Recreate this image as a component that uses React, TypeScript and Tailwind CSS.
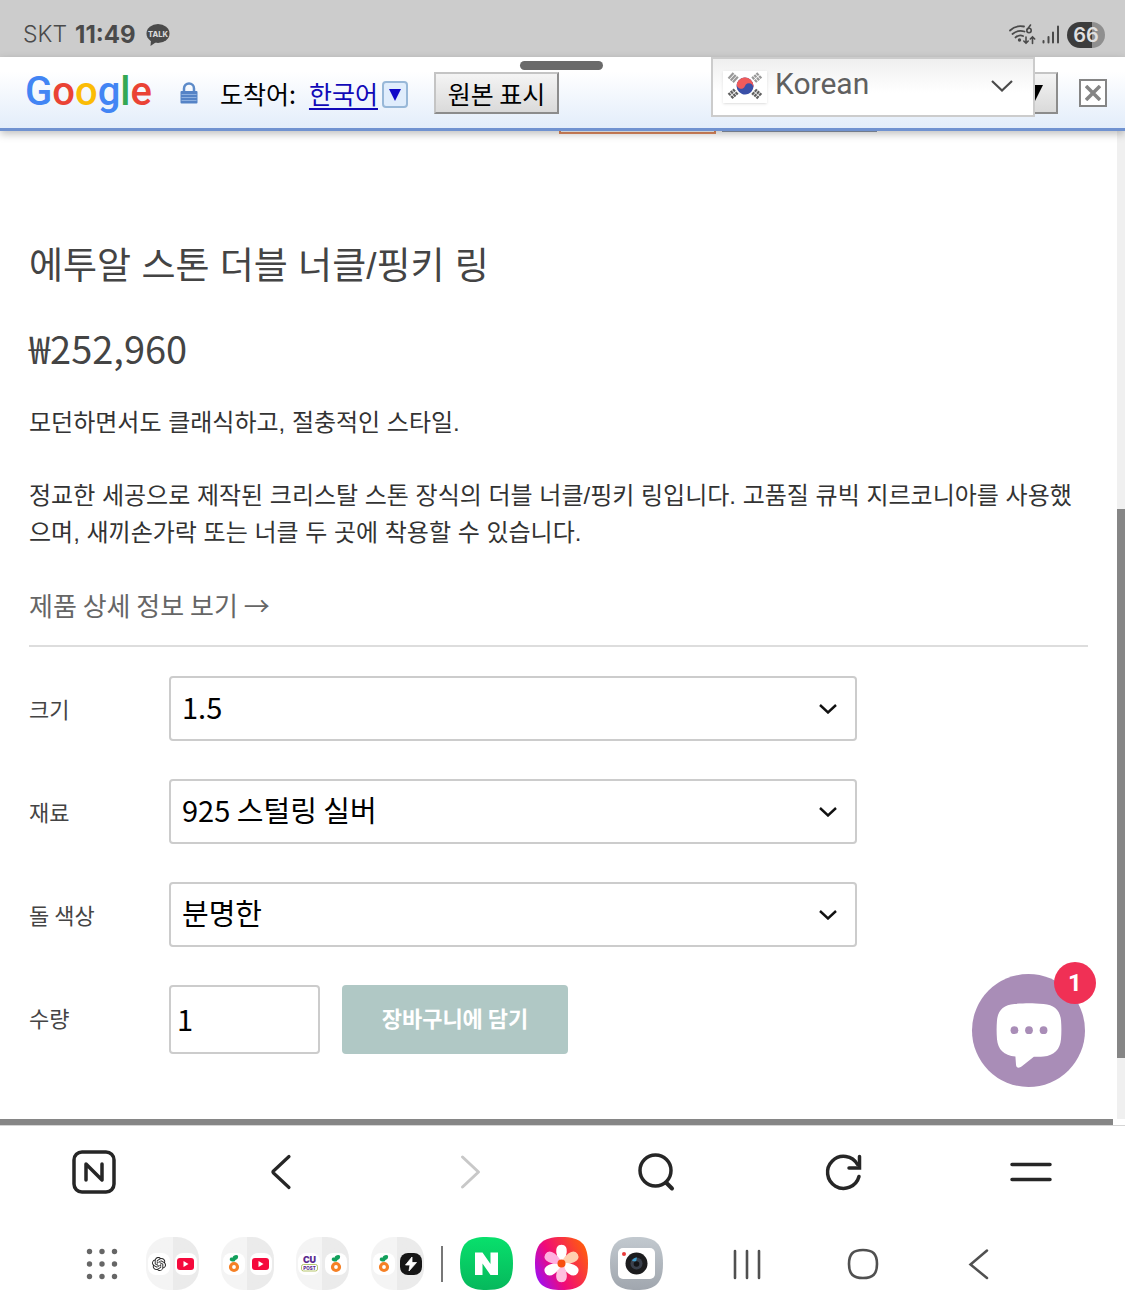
import React from "react";
import { SiOpenai } from "react-icons/si";

const KR = "font-['Noto_Sans_CJK_KR',sans-serif]";
const MIXED = "font-['Liberation_Sans','Noto_Sans_CJK_KR',sans-serif]";

function StatusBar() {
  return (
    <header className="flex h-[57px] items-center justify-between bg-[#ccc] pt-3 pr-5 pl-[23px] font-['Inter',sans-serif] text-2xl text-[#4a4a4a]">
      <div className="flex items-center">
        <span className="text-[23px] font-light">SKT</span>
        <span className="ml-2 font-bold">11:49</span>
        <svg className="ml-[10px] h-6 w-6" viewBox="0 0 24 24" aria-label="카카오톡">
          <ellipse cx="12" cy="10.500" rx="11.500" ry="9.500" fill="#4a4a4a" />
          <path d="M5 17 L4.500 23 L11 18.500z" fill="#4a4a4a" />
          <text x="12" y="13.500" textAnchor="middle" fontSize="7.500" fontWeight="800" fill="#d8d8d8" fontFamily="Inter, sans-serif">
            TALK
          </text>
        </svg>
      </div>
      <div className="flex items-center">
        <svg className="h-6 w-7" viewBox="0 0 28 24" fill="none" stroke="#4a4a4a" strokeWidth="1.800" strokeLinecap="round" aria-label="Wi-Fi">
          <path d="M1 7.500C5 3.500 10 2.500 15 3.500M3.500 11C7 8 11 7 15.500 8.500M6.500 14.500C9 12.200 11.500 11.800 14 13" />
          <circle cx="10.500" cy="17" r="0.800" fill="#4a4a4a" />
          <path d="M17 14v6M14.800 18l2.200 2.200 2.200-2.200M23.500 20.500v-6.500M21.300 16l2.200-2.200 2.200 2.200" strokeWidth="1.600" />
          <path d="M21.500 2L18.300 6.500" strokeWidth="1.600" />
          <circle cx="20" cy="7.500" r="2.200" strokeWidth="1.600" />
        </svg>
        <svg className="ml-1 h-5 w-5" viewBox="0 0 20 20" stroke="#4a4a4a" strokeWidth="2" strokeLinecap="round" aria-label="신호">
          <path d="M2.500 16v1.500M7.500 12v5.500M12 7.500v10M17 1.500v16" />
        </svg>
        <span className="ml-[6px] flex h-[26px] w-[38px] items-center justify-center rounded-full bg-linear-to-r from-[#3c3c3c] from-65% to-[#8f8f8f] to-65% text-xl font-semibold text-[#e0e0e0]">
          66
        </span>
      </div>
    </header>
  );
}

function Flag() {
  return (
    <svg className="h-8 w-11 bg-white shadow" viewBox="0 0 44 32" aria-hidden="true">
      <rect width="44" height="32" fill="#fff" />
      <g transform="rotate(20 22 15)">
        <circle cx="22" cy="15" r="8.500" fill="#3a50a8" />
        <path d="M13.500 15a8.500 8.500 0 0 1 17 0a4.250 4.250 0 0 0-8.500 0a4.250 4.250 0 0 1-8.500 0z" fill="#ef5b5b" />
      </g>
      <g fill="none" strokeWidth="2.200">
        <path d="M5.500 7.500l5-5.500M7.700 9.400l5-5.500M9.900 11.300l5-5.500" stroke="#999" />
        <path d="M33.500 2l5 5.500M31.300 3.900l5 5.500M29.100 5.800l5 5.500" stroke="#999" strokeDasharray="3.200 .8" />
        <path d="M5.500 22l5 5.500M7.700 20.100l5 5.500M9.900 18.200l5 5.500" stroke="#606060" strokeDasharray="3.200 .8" />
        <path d="M29.100 23.700l5-5.500M31.300 25.600l5-5.500M33.500 27.500l5-5.500" stroke="#606060" strokeDasharray="3.200 .8" />
      </g>
    </svg>
  );
}

function TranslateBar() {
  return (
    <div className={`${KR} relative z-10 flex h-[74px] items-center border-b-3 border-[#7092d0] bg-linear-to-b from-white from-20% to-[#e3edfa] pr-[18px] pl-[25px] text-[25px] leading-8 text-black shadow-[0_3px_8px_rgba(0,0,0,0.25)]`}>
      <div className="w-[129px] pb-[2px] font-['Roboto',sans-serif] text-[40px] leading-none font-medium" aria-label="Google">
        <span className="text-[#4285f4]">G</span>
        <span className="text-[#ea4335]">o</span>
        <span className="text-[#fbbc05]">o</span>
        <span className="text-[#4285f4]">g</span>
        <span className="text-[#34a853]">l</span>
        <span className="text-[#ea4335]">e</span>
      </div>
      <svg className="ml-[26px] h-[22px] w-[18px]" viewBox="0 0 18 22" aria-hidden="true">
        <path d="M4 10V6.500a5 5 0 0 1 10 0V10" fill="none" stroke="#5d8bc9" strokeWidth="2.500" />
        <rect x="0.500" y="9" width="17" height="12.500" rx="1" fill="#5583c6" />
        <path d="M1.500 12.500h15M1.500 15.500h15M1.500 18.500h15" stroke="#8db0e0" strokeWidth="1" />
      </svg>
      <span className="ml-[22px]">도착어:</span>
      <a href="#language" className="ml-[13px] text-[#1109b8] underline underline-offset-4">
        한국어
      </a>
      <button aria-label="언어 선택" className="mt-1 ml-1 flex h-[27px] w-[26px] items-center justify-center rounded-sm border-2 border-[#98b8d8] bg-[#e0edfc]">
        <svg className="h-3 w-3" viewBox="0 0 12 12">
          <path d="M0 0h12L6 12z" fill="#1109c8" />
        </svg>
      </button>
      <button className="ml-[26px] h-[42px] w-[125px] shrink-0 border-2 border-t-[#c4c4c4] border-r-[#8c8c8c] border-b-[#8c8c8c] border-l-[#c4c4c4] bg-linear-to-b from-[#f4f4f4] to-[#dadada]">
        원본 표시
      </button>
      <button aria-label="옵션" className="ml-auto flex h-[42px] w-[60px] items-center justify-end border-2 border-t-[#c4c4c4] border-r-[#8c8c8c] border-b-[#8c8c8c] border-l-[#c4c4c4] bg-linear-to-b from-[#f4f4f4] to-[#dadada] pr-[13px]">
        <svg className="h-4 w-4" viewBox="0 0 16 16">
          <path d="M0 0h16L8 16z" />
        </svg>
      </button>
      <button aria-label="닫기" className="ml-[21px] flex h-7 w-7 items-center justify-center border-2 border-[#858585] bg-white">
        <svg className="h-4 w-4" viewBox="0 0 16 16" stroke="#858585" strokeWidth="3.500">
          <path d="M1 1l14 14M15 1L1 15" />
        </svg>
      </button>
      <div className="absolute top-1 left-[520px] h-[9px] w-[83px] rounded-full bg-[#6a6a6a]" />
      <div className="absolute top-0 right-[90px] h-[60px] w-[324px] border-2 border-[#ccc] bg-linear-to-b from-[#efefef] to-white to-60%">
        <div className="pointer-events-none absolute top-3 left-[10px]">
          <Flag />
        </div>
        <select aria-label="Language" className="h-[50px] w-full appearance-none pl-[62px] font-['Roboto',sans-serif] text-[30px] text-[#606060]">
          <option>Korean</option>
        </select>
        <svg className="pointer-events-none absolute top-[21px] right-5 h-3 w-[22px]" viewBox="0 0 22 12" fill="none" stroke="#4a4a4a" strokeWidth="2.200">
          <path d="M1 1l10 9.500L21 1" />
        </svg>
      </div>
    </div>
  );
}

function SelectRow({ id, label, options }: { id: string; label: string; options: string[] }) {
  return (
    <div className="flex items-center">
      <label htmlFor={id} className="w-[140px] shrink-0 text-[22px] text-[#444]">
        {label}
      </label>
      <div className="relative w-[65%]">
        <select id={id} className="block h-[65px] w-full appearance-none rounded-sm border-2 border-[#ccc] bg-white px-[11px] pb-1 text-[29px] text-black">
          {options.map((o) => (
            <option key={o}>{o}</option>
          ))}
        </select>
        <svg className="pointer-events-none absolute top-7 right-5 h-[10px] w-[18px]" viewBox="0 0 18 10" fill="none" stroke="#111" strokeWidth="2.400">
          <path d="M1 1l8 7.500L17 1" />
        </svg>
      </div>
    </div>
  );
}

function Chat() {
  return (
    <button aria-label="채팅 열기" className="absolute right-8 bottom-8 h-[113px] w-[113px] rounded-full bg-[#a98db7] pt-[10px]">
      <svg className="mx-auto h-[66px] w-[66px]" viewBox="0 0 68 68">
        <path d="M19 1C31 0 37 0 49 1C60 2 66 7 67 18C67.500 25 67.500 30 67 37C66 48 60 54 49 55C45 55.500 42 55.500 39 55.500L27 65C23 68 20.500 67 20.500 62L20 55C8 54 2 48 1 37C.500 30 .500 25 1 18C2 7 8 2 19 1z" fill="#fff" />
        <g fill="#a98db7">
          <circle cx="19" cy="28" r="4" />
          <circle cx="34" cy="28" r="4" />
          <circle cx="49" cy="28" r="4" />
        </g>
      </svg>
      <span className="absolute -top-3 -right-[11px] flex h-[42px] w-[42px] items-center justify-center rounded-full bg-[#f03055] font-['Roboto',sans-serif] text-2xl leading-none font-bold text-white">
        1
      </span>
    </button>
  );
}

function Product() {
  return (
    <main className={`${KR} relative flex-1 px-[29px] pb-[65px] text-2xl leading-[37px] text-[#333]`}>
      <div className="-mx-[29px] flex h-[3px] items-start gap-[6px] pl-[559px]">
        <div className="h-[3px] w-[157px] border-2 border-t-0 border-[#e08a60]" />
        <div className="h-px w-[155px] bg-[#8d98aa]" />
      </div>
      <h1 className={`${MIXED} mt-[109px] text-[37px] leading-[48px] text-[#444]`}>에투알 스톤 더블 너클/핑키 링</h1>
      <p className="mt-[33px] text-[38px] leading-[48px] text-[#444]">₩252,960</p>
      <div className={MIXED}>
        <p className="mt-8">모던하면서도 클래식하고, 절충적인 스타일.</p>
        <p className="mt-9">
          정교한 세공으로 제작된 크리스탈 스톤 장식의 더블 너클/핑키 링입니다. 고품질 큐빅 지르코니아를 사용했으며, 새끼손가락 또는 너클 두 곳에 착용할 수 있습니다.
        </p>
      </div>
      <div className="mt-9 border-b-2 border-[#ddd] pb-[22px]">
        <a href="#details" className="block text-[26px] leading-9 text-[#666]">
          제품 상세 정보 보기 →
        </a>
      </div>
      <form className="mt-[29px] flex flex-col gap-[38px]" onSubmit={(e) => e.preventDefault()}>
        <SelectRow id="size" label="크기" options={["1.5"]} />
        <SelectRow id="material" label="재료" options={["925 스털링 실버"]} />
        <SelectRow id="stone" label="돌 색상" options={["분명한"]} />
        <div className="flex items-center">
          <label htmlFor="qty" className="w-[140px] shrink-0 pb-1 text-[22px] text-[#444]">
            수량
          </label>
          <input id="qty" defaultValue="1" className="h-[69px] w-[151px] rounded-sm border-2 border-[#ccc] px-[6px] pb-1 text-[29px] text-black" />
          <button className="ml-[22px] h-[69px] w-[226px] rounded-sm bg-[#b0c8c5] pb-1 text-[22px] font-bold text-white">장바구니에 담기</button>
        </div>
      </form>
      <Chat />
    </main>
  );
}

function BrowserNav() {
  const item = "flex items-center justify-center";
  return (
    <nav aria-label="브라우저" className="grid h-[92px] grid-cols-6 bg-white text-[#262626]">
      <button aria-label="네이버 홈" className={item}>
        <svg className="h-11 w-11" viewBox="0 0 44 44" fill="none" stroke="currentColor" strokeWidth="3.500">
          <rect x="2" y="2" width="40" height="40" rx="8" />
          <path d="M14 30V14L30 30V14" strokeLinecap="round" strokeLinejoin="round" />
        </svg>
      </button>
      <button aria-label="뒤로" className={item}>
        <svg className="h-10 w-10" viewBox="0 0 40 40" fill="none" stroke="currentColor" strokeWidth="3.200" strokeLinecap="round" strokeLinejoin="round">
          <path d="M28 4.500L12.500 19Q11.500 20 12.500 21L28 35.500" />
        </svg>
      </button>
      <button aria-label="앞으로" disabled className={`${item} text-[#c8c8c8]`}>
        <svg className="h-10 w-10" viewBox="0 0 40 40" fill="none" stroke="currentColor" strokeWidth="3" strokeLinecap="round" strokeLinejoin="round">
          <path d="M13.500 5L29.500 20L13.500 35" />
        </svg>
      </button>
      <button aria-label="검색" className={item}>
        <svg className="h-11 w-11" viewBox="0 0 44 44" fill="none" stroke="currentColor" strokeWidth="3.500" strokeLinecap="round">
          <ellipse cx="21.500" cy="20.500" rx="15.500" ry="15.500" />
          <path d="M32.500 33l5.500 5.500" strokeWidth="4" />
        </svg>
      </button>
      <button aria-label="새로고침" className={item}>
        <svg className="h-11 w-11" viewBox="0 0 44 44" fill="none" stroke="currentColor" strokeWidth="3.500" strokeLinecap="round">
          <path d="M37 26.500A16 16 0 1 1 35.500 14.500" />
          <path d="M37.500 6.500V18H27" />
        </svg>
      </button>
      <button aria-label="메뉴" className={item}>
        <svg className="h-10 w-[42px]" viewBox="0 0 42 40" stroke="currentColor" strokeWidth="3.500" strokeLinecap="round">
          <path d="M2 12.500h38M2 27.500h38" />
        </svg>
      </button>
    </nav>
  );
}

function Youtube() {
  return (
    <svg className="h-3 w-[17px]" viewBox="0 0 17 12">
      <rect width="17" height="12" rx="3" fill="#f5093c" />
      <path d="M6.500 3v6l5-3z" fill="#fff" />
    </svg>
  );
}

function Carrot() {
  return (
    <svg className="h-[18px] w-3" viewBox="0 0 12 18">
      <circle cx="6" cy="12" r="3.500" fill="#fff" stroke="#f58025" strokeWidth="3.200" />
      <path d="M2 5.500C1 2.500 3.500 2 4.500 2.800C5 0 9 -.5 10 .8C10.500 3.500 9 4.500 7.500 5L6.500 6.500H4z" fill="#13a05c" />
    </svg>
  );
}

function CuPost() {
  return (
    <svg className="h-[17px] w-[17px]" viewBox="0 0 17 17">
      <text x="8.500" y="7.500" textAnchor="middle" fontSize="9" fontWeight="900" fill="#5b2b90" fontFamily="Inter, sans-serif">
        CU
      </text>
      <rect x="0.500" y="9.500" width="16" height="6.500" rx="2" fill="#fff" stroke="#a5b84a" strokeWidth="0.800" />
      <text x="8.500" y="14.500" textAnchor="middle" fontSize="4.500" fontWeight="800" fill="#5b2b90" fontFamily="Inter, sans-serif">
        POST
      </text>
    </svg>
  );
}

function Bolt() {
  return (
    <svg className="h-[22px] w-[22px]" viewBox="0 0 22 22">
      <rect width="22" height="22" rx="8" fill="#161616" />
      <path d="M12 4L5.500 12H10L9 18L16.500 9.500H12z" fill="#fff" stroke="#fff" strokeWidth="0.800" strokeLinejoin="round" />
    </svg>
  );
}

function Pair({ label, left, right }: { label: string; left: React.ReactNode; right: React.ReactNode }) {
  return (
    <button aria-label={label} className="grid h-[53px] w-[53px] shrink-0 grid-cols-2 items-center justify-items-center rounded-[22px] bg-linear-to-r from-[#f4f4f4] from-50% to-[#ebebeb] to-50%">
      <span className="flex h-[22px] w-[22px] items-center justify-center rounded-lg bg-white">{left}</span>
      <span className="flex h-[22px] w-[22px] items-center justify-center rounded-lg bg-white">{right}</span>
    </button>
  );
}

function Taskbar() {
  const petals = [
    ["#fff", 0],
    ["#ffd0b0", 60],
    ["#fff", 120],
    ["#ffc0e0", 180],
    ["#fff", 240],
    ["#ffb0e0", 300],
  ] as const;
  return (
    <footer className="flex h-[91px] items-center bg-white pl-[86px]">
      <button aria-label="앱 목록" className="mr-7 shrink-0">
        <svg className="h-8 w-8" viewBox="0 0 32 32" fill="#666">
          {[3.5, 16, 28.5].map((y) => [3.5, 16, 28.5].map((x) => <circle key={`${x}-${y}`} cx={x} cy={y} r="2.700" />))}
        </svg>
      </button>
      <div className="flex gap-[22px]">
        <Pair label="ChatGPT, YouTube" left={<SiOpenai className="h-[14px] w-[14px] text-[#222]" />} right={<Youtube />} />
        <Pair label="당근, YouTube" left={<Carrot />} right={<Youtube />} />
        <Pair label="CU POST, 당근" left={<CuPost />} right={<Carrot />} />
        <Pair label="당근, 번개장터" left={<Carrot />} right={<Bolt />} />
      </div>
      <div className="mx-[17px] h-9 w-[2px] bg-[#777]" />
      <div className="flex gap-[22px]">
        <button aria-label="네이버">
          <svg className="h-[53px] w-[53px]" viewBox="0 0 53 53">
            <defs>
              <linearGradient id="naver" x2="0" y2="1">
                <stop stopColor="#08e06c" />
                <stop offset="1" stopColor="#06b85c" />
              </linearGradient>
            </defs>
            <path d="M26.500 0C46 0 53 7 53 26.500S46 53 26.500 53S0 46 0 26.500S7 0 26.500 0z" fill="url(#naver)" />
            <path d="M15 15.500H22.500L30.500 27V15.500H38V38H30.500L22.500 26.500V38H15z" fill="#fff" />
          </svg>
        </button>
        <button aria-label="갤러리">
          <svg className="h-[53px] w-[53px]" viewBox="0 0 53 53">
            <defs>
              <linearGradient id="gallery" x1="0" y1="0.800" x2="1" y2="0.300">
                <stop stopColor="#9a10f8" />
                <stop offset=".4" stopColor="#f00a78" />
                <stop offset="1" stopColor="#ff5a10" />
              </linearGradient>
            </defs>
            <path d="M26.500 0C46 0 53 7 53 26.500S46 53 26.500 53S0 46 0 26.500S7 0 26.500 0z" fill="url(#gallery)" />
            {petals.map(([fill, angle]) => (
              <path key={angle} d="M26.500 26.500C22 20 19 8.500 26.500 8.500S31 20 26.500 26.500z" fill={fill} stroke={fill} strokeWidth="1.500" transform={`rotate(${angle} 26.500 26.500)`} />
            ))}
            <circle cx="26.500" cy="26.500" r="4" fill="#f85010" />
          </svg>
        </button>
        <button aria-label="카메라">
          <svg className="h-[53px] w-[53px]" viewBox="0 0 53 53">
            <defs>
              <linearGradient id="camera" x2="0" y2="1">
                <stop stopColor="#c2c9cf" />
                <stop offset="1" stopColor="#a0a6ae" />
              </linearGradient>
            </defs>
            <path d="M26.500 0C46 0 53 7 53 26.500S46 53 26.500 53S0 46 0 26.500S7 0 26.500 0z" fill="url(#camera)" />
            <rect x="8" y="11" width="37" height="31" rx="5" fill="#fff" />
            <circle cx="14" cy="17" r="2" fill="#e83a3a" />
            <circle cx="26.500" cy="26.500" r="11" fill="#1c1c1e" />
            <circle cx="26.500" cy="26.500" r="6" fill="#3a404c" />
            <path d="M22 24a5.500 5.500 0 0 1 5-3.500l-1 4z" fill="#3f9fd0" />
            <circle cx="26.500" cy="27" r="2.800" fill="#151518" />
          </svg>
        </button>
      </div>
      <div className="ml-[66px] flex items-center gap-20 text-[#505050]">
        <button aria-label="최근 앱">
          <svg className="h-9 w-9" viewBox="0 0 36 36" stroke="currentColor" strokeWidth="2.600" strokeLinecap="round">
            <path d="M6 5v27M18 5v27M30 5v27" />
          </svg>
        </button>
        <button aria-label="홈">
          <svg className="h-9 w-9" viewBox="0 0 36 36" fill="none" stroke="currentColor" strokeWidth="2.600">
            <path d="M18 4C28 4 32 8 32 18S28 32 18 32S4 28 4 18S8 4 18 4z" />
          </svg>
        </button>
        <button aria-label="뒤로 가기">
          <svg className="h-9 w-9" viewBox="0 0 36 36" fill="none" stroke="currentColor" strokeWidth="2.500" strokeLinecap="round">
            <path d="M26 4.500L9.500 18.500L26 32" />
          </svg>
        </button>
      </div>
    </footer>
  );
}

export default function App() {
  return (
    <div className="bg-white">
      <StatusBar />
      <TranslateBar />
      <div className="flex">
        <Product />
        <div className="flex w-2 flex-col bg-[#f0f0f0]" aria-hidden="true">
          <div className="flex-[378]" />
          <div className="flex-[549] bg-[#868686]" />
          <div className="flex-[61]" />
        </div>
      </div>
      <div className="border-b border-[#d5d5d5] pr-3" aria-hidden="true">
        <div className="h-[6px] bg-[#868686]" />
      </div>
      <BrowserNav />
      <Taskbar />
    </div>
  );
}
